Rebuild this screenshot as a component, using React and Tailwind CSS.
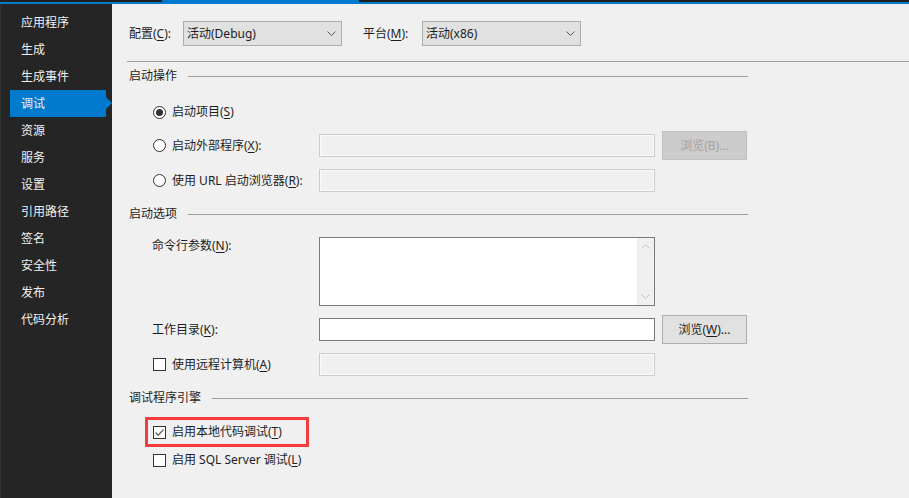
import React from "react";

const navItems = ["应用程序", "生成", "生成事件", "调试", "资源", "服务", "设置", "引用路径", "签名", "安全性", "发布", "代码分析"];

function Key({ children }) {
    return <span className="underline underline-offset-2">{children}</span>;
}

function Radio({ checked }) {
    return (
        <span className="w-[13px] h-[13px] rounded-full border border-[#333333] bg-white flex items-center justify-center shrink-0">
            {checked ? <span className="w-[7px] h-[7px] rounded-full bg-[#333333]"></span> : null}
        </span>
    );
}

function Check({ checked }) {
    return (
        <span className="w-[13px] h-[13px] border border-[#333333] bg-white flex items-center justify-center shrink-0">
            {checked ? (
                <svg width="11" height="11" viewBox="0 0 11 11">
                    <path d="M1.5 5.5 L4.2 8.2 L9.5 2.5" fill="none" stroke="#666666" strokeWidth="1.3" />
                </svg>
            ) : null}
        </span>
    );
}

function Chevron({ up, color = "#555555" }) {
    return (
        <svg width="9" height="5" viewBox="0 0 9 5">
            <path d={up ? "M0.5 4.5 L4.5 0.5 L8.5 4.5" : "M0.5 0.5 L4.5 4.5 L8.5 0.5"} fill="none" stroke={color} strokeWidth="1" />
        </svg>
    );
}

function Dropdown({ value }) {
    return (
        <div className="w-[159px] h-[25px] bg-[#e1e1e1] border border-[#adadad] flex items-center justify-between pl-[3px] pr-[5px]">
            <span>{value}</span>
            <Chevron />
        </div>
    );
}

function SectionHeader({ title }) {
    return (
        <div className="h-[28px] w-[621px] flex items-center">
            <span className="ml-[2px]">{title}</span>
            <span className="flex-1 h-px bg-[#a0a0a0] ml-[11px]"></span>
        </div>
    );
}

function TextBox({ disabled }) {
    return disabled
        ? <div className="w-[336px] h-[23px] border border-[#cccccc] bg-[#f0f0f0] shadow-[inset_0_0_0_1px_#fafafa]"></div>
        : <div className="w-[336px] h-[23px] border border-[#7a7a7a] bg-white"></div>;
}

function Button({ children, disabled }) {
    return disabled
        ? <div className="w-[85px] h-[29px] bg-[#cccccc] border border-[#bfbfbf] text-[#a3a3a3] flex items-center justify-center">{children}</div>
        : <div className="w-[85px] h-[29px] bg-[#e1e1e1] border border-[#adadad] flex items-center justify-center">{children}</div>;
}

export default function App() {
    return (
        <div className="w-[909px] h-[498px] flex flex-col overflow-hidden bg-[#f0f0f0] text-[12px] text-[#1e1e1e] font-['Noto_Sans','Noto_Sans_CJK_SC',sans-serif]">

            {/* window top strip */}
            <div className="h-[2px] flex">
                <div className="w-[162px] bg-[#1e1e1e]"></div>
                <div className="w-[197px] bg-[#007acc]"></div>
                <div className="flex-1 bg-[#1e1e1e]"></div>
            </div>
            <div className="h-[2px] bg-[#007acc]"></div>

            <div className="flex flex-1">

                {/* sidebar */}
                <div className="w-[112px] bg-[#252526] border-l border-[#303033] pt-[5px] flex flex-col">
                    {navItems.map((item) => (
                        <div key={item} className={"relative ml-[9px] w-[96px] h-[27px] leading-[27px] pl-[11px] text-[#f1f1f1] " + (item == "调试" ? "bg-[#007acc]" : "")}>
                            {item}
                            {item == "调试" ? <span className="absolute right-[-6px] top-[7px] border-y-[6px] border-y-transparent border-l-[6px] border-l-[#007acc]"></span> : ""}
                        </div>
                    ))}
                </div>

                {/* main */}
                <div className="flex-1 pl-[15px] pt-[17px] flex flex-col">

                    <div className="h-[25px] flex items-center pl-[2px]">
                        <span className="w-[54px]">配置(<Key>C</Key>):</span>
                        <Dropdown value="活动(Debug)" />
                        <span className="w-[59px] ml-[21px]">平台(<Key>M</Key>):</span>
                        <Dropdown value="活动(x86)" />
                    </div>

                    <div className="mt-[15px] h-px bg-[#a0a0a0]"></div>

                    <SectionHeader title="启动操作" />

                    <div className="mt-[10px] h-[24px] flex items-center pl-[26px] gap-[6px]">
                        <Radio checked />
                        <span>启动项目(<Key>S</Key>)</span>
                    </div>

                    <div className="mt-[7px] h-[29px] flex items-center pl-[26px]">
                        <div className="w-[166px] flex items-center gap-[6px]">
                            <Radio />
                            <span>启动外部程序(<Key>X</Key>):</span>
                        </div>
                        <TextBox disabled />
                        <div className="ml-[7px]"><Button disabled>浏览(B)...</Button></div>
                    </div>

                    <div className="mt-[9px] h-[23px] flex items-center pl-[26px]">
                        <div className="w-[166px] flex items-center gap-[6px]">
                            <Radio />
                            <span>使用 URL 启动浏览器(<Key>R</Key>):</span>
                        </div>
                        <TextBox disabled />
                    </div>

                    <div className="mt-[8px]">
                        <SectionHeader title="启动选项" />
                    </div>

                    <div className="mt-[9px] h-[69px] flex items-start pl-[25px]">
                        <span className="w-[167px] leading-[18px]">命令行参数(<Key>N</Key>):</span>
                        <div className="w-[336px] h-[69px] border border-[#7a7a7a] bg-white flex justify-end">
                            <div className="w-[17px] bg-[#f0f0f0] flex flex-col items-center justify-between py-[6px]">
                                <Chevron up color="#c2c2c2" />
                                <Chevron color="#c2c2c2" />
                            </div>
                        </div>
                    </div>

                    <div className="mt-[9px] h-[29px] flex items-center pl-[25px]">
                        <span className="w-[167px]">工作目录(<Key>K</Key>):</span>
                        <TextBox />
                        <div className="ml-[7px]"><Button>浏览(<Key>W</Key>)...</Button></div>
                    </div>

                    <div className="mt-[9px] h-[23px] flex items-center pl-[26px]">
                        <div className="w-[166px] flex items-center gap-[6px]">
                            <Check />
                            <span>使用远程计算机(<Key>A</Key>)</span>
                        </div>
                        <TextBox disabled />
                    </div>

                    <div className="mt-[8px]">
                        <SectionHeader title="调试程序引擎" />
                    </div>

                    <div className="mt-[5px] ml-[18px] w-[164px] h-[30px] border-[3px] border-[#f53b3b] flex items-center pl-[5px] gap-[6px]">
                        <Check checked />
                        <span>启用本地代码调试(<Key>T</Key>)</span>
                    </div>

                    <div className="h-[26px] flex items-center pl-[26px] gap-[6px]">
                        <Check />
                        <span>启用 SQL Server 调试(<Key>L</Key>)</span>
                    </div>

                </div>
            </div>
        </div>
    )
}
